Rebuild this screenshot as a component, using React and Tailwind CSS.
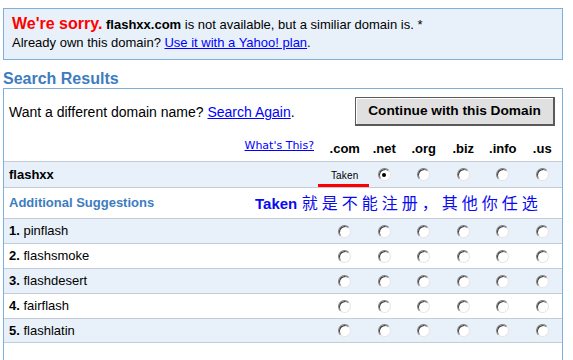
import React from 'react';

// Domain search results page with TLD radio grid

const tlds = ['.com', '.net', '.org', '.biz', '.info', '.us'];
const suggestions = ['pinflash', 'flashsmoke', 'flashdesert', 'fairflash', 'flashlatin'];

function Radio({ checked }) {
  return (
    <span className="relative inline-block w-[13px] h-[13px] rounded-full bg-white border border-t-[#808080] border-l-[#808080] border-r-[#e4e4e4] border-b-[#e4e4e4] shadow-[inset_1px_1px_0_#404040]">
      {checked && (
        <span className="absolute left-[3.5px] top-[3.5px] w-[4px] h-[4px] rounded-full bg-black" />
      )}
    </span>
  );
}

export default function App() {
  return (
    <div className="h-[360px] overflow-hidden bg-white font-['Liberation_Sans',Arial,sans-serif] text-black">
      <div className="ml-[3px] w-[560px] h-full flex flex-col pt-[8px]">
        {/* sorry banner */}
        <div className="h-[52px] border border-[#7fb0da] bg-[#e8f1fa] pl-[8px] pt-[6px] text-[13px] leading-[18px]">
          <div>
            <span className="text-[16px] font-bold text-[#ff0000]">We're sorry.</span>{' '}
            <span className="font-bold">flashxx.com</span> is not available, but a similiar domain is. *
          </div>
          <div>
            Already own this domain?{' '}
            <a href="#" className="text-[#0000ff] underline">Use it with a Yahoo! plan</a>.
          </div>
        </div>

        <h2 className="mt-[9px] text-[16px] leading-[19px] font-bold text-[#3d7cbf]">Search Results</h2>

        <div className="flex-1 border border-b-0 border-[#7fb0da]">
          <div className="flex items-center justify-between pl-[5px] pr-[7px] pt-[8px]">
            <div className="text-[14px] pt-[2px]">
              Want a different domain name?{' '}
              <a href="#" className="text-[#0000ff] underline">Search Again</a>.
            </div>
            <button className="w-[200px] h-[29px] bg-[#e0e0e0] border border-[#5a5a5a] border-r-2 border-b-2 shadow-[inset_1px_1px_0_#ffffff] text-[13.7px] font-bold">
              Continue with this Domain
            </button>
          </div>

          {/* tld header */}
          <div className="grid grid-cols-[1fr_repeat(6,39.5px)] h-[35px] items-end pb-[4px]">
            <div className="text-right pr-[11px] pb-[1px]">
              <a href="#" className="font-['DejaVu_Sans',Verdana,sans-serif] text-[11px] text-[#0000ff] underline">What's This?</a>
            </div>
            {tlds.map((t) => (
              <div key={t} className="text-center text-[13px] leading-[16px] font-bold">{t}</div>
            ))}
          </div>

          {/* searched domain */}
          <div className="grid grid-cols-[1fr_repeat(6,39.5px)] h-[26px] items-center border-t border-[#c3ccd6] bg-[#e8f1fa]">
            <div className="pl-[5px] text-[13px] font-bold">flashxx</div>
            <div className="relative h-full flex items-center justify-center">
              <span className="text-[10px] tracking-[0.2px] pt-[1px]">Taken</span>
              <span className="absolute left-[-7px] bottom-0 w-[51px] h-[3px] bg-[#ff0000]" />
            </div>
            {tlds.slice(1).map((t, i) => (
              <div key={t} className="flex justify-center">
                <Radio checked={i === 0} />
              </div>
            ))}
          </div>

          <div className="flex items-center h-[31px] border-t border-[#c3ccd6]">
            <div className="w-[251px] pl-[5px] text-[13px] font-bold text-[#3d7cbf]">Additional Suggestions</div>
            <div className="text-[#0a0af0] leading-[20px]">
              <span className="font-bold text-[15px]">Taken</span>{' '}
              <span className="font-['Noto_Sans_CJK_SC',sans-serif] text-[16px] tracking-[4px]">就是不能注册，其他你任选</span>
            </div>
          </div>

          {suggestions.map((s, i) => (
            <div
              key={s}
              className={`grid grid-cols-[1fr_repeat(6,39.5px)] h-[25px] items-center border-t border-[#c3ccd6] ${i % 2 === 0 ? 'bg-[#e8f1fa]' : 'bg-white'} ${i === suggestions.length - 1 ? 'border-b' : ''}`}
            >
              <div className="pl-[5px] text-[13px]">
                <span className="font-bold">{i + 1}.</span> {s}
              </div>
              {tlds.map((t) => (
                <div key={t} className="flex justify-center">
                  <Radio />
                </div>
              ))}
            </div>
          ))}
        </div>
      </div>
    </div>
  );
}
